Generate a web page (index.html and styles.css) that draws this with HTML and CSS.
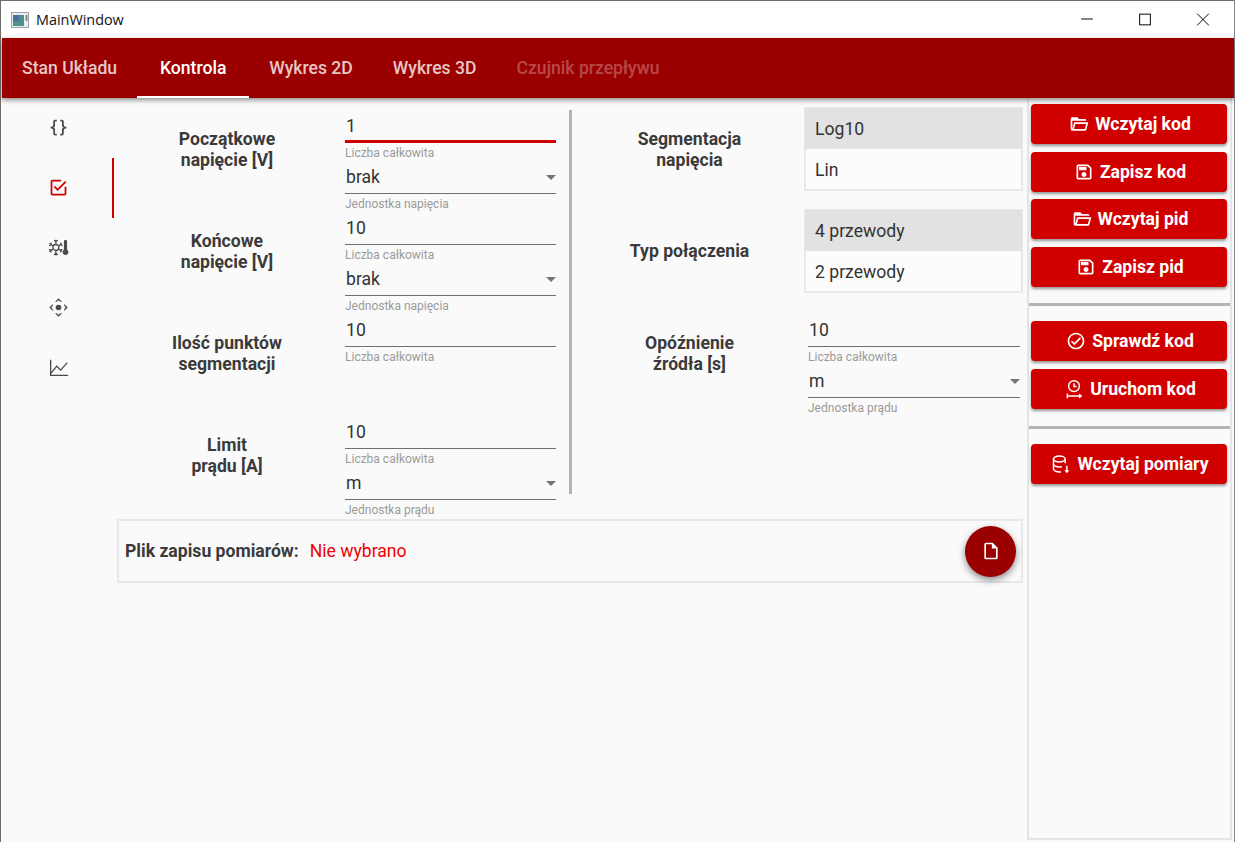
FILE: index.html
```html
<!DOCTYPE html>
<html lang="pl">
<head>
<meta charset="utf-8">
<title>MainWindow</title>
<link rel="stylesheet" href="styles.css">
</head>
<body>
<div class="window">
  <header class="titlebar">
    <svg class="app-icon" viewBox="0 0 18 16"><rect x="0.5" y="0.5" width="17" height="15" fill="#e8eef2" stroke="#9aa3aa"/><rect x="2" y="3" width="11" height="11" fill="#4f8f8a"/><rect x="2" y="3" width="6" height="6" fill="#4a6f98"/><rect x="14.5" y="3" width="2" height="6" fill="#7d8a92"/></svg>
    <span class="title">MainWindow</span>
    <div class="win-controls">
      <svg class="win-btn" viewBox="0 0 46 38"><path d="M17 18.5H29" stroke="#000" fill="none"/></svg>
      <svg class="win-btn" viewBox="0 0 46 38"><rect x="17.500" y="13.500" width="11" height="11" stroke="#000" fill="none"/></svg>
      <svg class="win-btn" viewBox="0 0 46 38"><path d="M17 13L29 25M29 13L17 25" stroke="#000" fill="none"/></svg>
    </div>
  </header>

  <nav class="appbar">
    <a class="tab">Stan Układu</a>
    <a class="tab tab-active">Kontrola</a>
    <a class="tab">Wykres 2D</a>
    <a class="tab">Wykres 3D</a>
    <a class="tab tab-disabled">Czujnik przepływu</a>
  </nav>

  <div class="content">
    <aside class="rail">
      <div class="rail-item">
        <svg class="rail-icon" viewBox="0 0 24 24"><path d="M8,3A2,2 0 0,0 6,5V9A2,2 0 0,1 4,11H3V13H4A2,2 0 0,1 6,15V19A2,2 0 0,0 8,21H10V19H8V14A2,2 0 0,0 6,12A2,2 0 0,0 8,10V5H10V3M16,3A2,2 0 0,1 18,5V9A2,2 0 0,0 20,11H21V13H20A2,2 0 0,0 18,15V19A2,2 0 0,1 16,21H14V19H16V14A2,2 0 0,1 18,12A2,2 0 0,1 16,10V5H14V3H16Z"/></svg>
      </div>
      <div class="rail-item rail-item-active">
        <svg class="rail-icon" viewBox="0 0 24 24"><path d="M19,19H5V5H15V3H5C3.89,3 3,3.89 3,5V19A2,2 0 0,0 5,21H19A2,2 0 0,0 21,19V11H19M7.91,10.08L6.5,11.5L11,16L21,6L19.59,4.58L11,13.17L7.91,10.08Z"/></svg>
      </div>
      <div class="rail-item">
        <svg class="rail-icon" viewBox="0 0 24 24"><circle cx="9" cy="12" r="3.400" fill="none" stroke="currentColor" stroke-width="1.500"/><path d="M9 3V8.600M9 15.400V21M7 3.500L9 5.500L11 3.500M7 20.500L9 18.500L11 20.500M1.500 7.500L6.100 10.300M11.900 13.700L16 16.300M1.500 16.500L6.100 13.700M11.900 10.300L16 7.700M1.300 10L3.800 9L3.300 6.500M1.300 14L3.800 15L3.300 17.500M14.700 6.500L14.200 9L16.700 10M14.700 17.500L14.200 15L16.700 14" fill="none" stroke="currentColor" stroke-width="1.400"/><path d="M20 3A1.800 1.800 0 0 1 21.800 4.800V14.500A3.300 3.300 0 1 1 18.200 14.500V4.800A1.800 1.800 0 0 1 20 3Z"/></svg>
      </div>
      <div class="rail-item">
        <svg class="rail-icon" viewBox="0 0 24 24"><circle cx="12" cy="12" r="3.200"/><path d="M12 1.500L16 5.500H14L12 3.800L10 5.500H8ZM12 22.500L8 18.500H10L12 20.200L14 18.500H16ZM1.500 12L5.500 8V10L3.800 12L5.500 14V16ZM22.500 12L18.500 16V14L20.200 12L18.500 10V8Z"/></svg>
      </div>
      <div class="rail-item">
        <svg class="rail-icon" viewBox="0 0 24 24"><path d="M3 3V21H23" fill="none" stroke="currentColor" stroke-width="1.500"/><path d="M3.500 18.500L10 10.500L14.500 15L22 6.500" fill="none" stroke="currentColor" stroke-width="1.500"/></svg>
      </div>
    </aside>

    <main class="main">
      <div class="form">
        <section class="form-left">
          <div class="row">
            <div class="row-label">Początkowe<br>napięcie [V]</div>
            <div class="fields">
              <div class="field"><div class="input input-focus">1</div><div class="helper">Liczba całkowita</div></div>
              <div class="field"><div class="input">brak<span class="caret"></span></div><div class="helper">Jednostka napięcia</div></div>
            </div>
          </div>
          <div class="row">
            <div class="row-label">Końcowe<br>napięcie [V]</div>
            <div class="fields">
              <div class="field"><div class="input">10</div><div class="helper">Liczba całkowita</div></div>
              <div class="field"><div class="input">brak<span class="caret"></span></div><div class="helper">Jednostka napięcia</div></div>
            </div>
          </div>
          <div class="row">
            <div class="row-label">Ilość punktów<br>segmentacji</div>
            <div class="fields">
              <div class="field"><div class="input">10</div><div class="helper">Liczba całkowita</div></div>
            </div>
          </div>
          <div class="row">
            <div class="row-label">Limit<br>prądu [A]</div>
            <div class="fields">
              <div class="field"><div class="input">10</div><div class="helper">Liczba całkowita</div></div>
              <div class="field"><div class="input">m<span class="caret"></span></div><div class="helper">Jednostka prądu</div></div>
            </div>
          </div>
        </section>

        <div class="form-divider"></div>

        <section class="form-right">
          <div class="row-r">
            <div class="row-label-r">Segmentacja<br>napięcia</div>
            <div class="toggle">
              <div class="toggle-item toggle-on">Log10</div>
              <div class="toggle-item">Lin</div>
            </div>
          </div>
          <div class="row-r">
            <div class="row-label-r row-label-single">Typ połączenia</div>
            <div class="toggle">
              <div class="toggle-item toggle-on">4 przewody</div>
              <div class="toggle-item">2 przewody</div>
            </div>
          </div>
          <div class="row-r">
            <div class="row-label-r">Opóźnienie<br>źródła [s]</div>
            <div class="fields fields-r">
              <div class="field"><div class="input">10</div><div class="helper">Liczba całkowita</div></div>
              <div class="field"><div class="input">m<span class="caret"></span></div><div class="helper">Jednostka prądu</div></div>
            </div>
          </div>
        </section>
      </div>

      <div class="file-panel">
        <span class="file-label">Plik zapisu pomiarów:</span>
        <span class="file-value">Nie wybrano</span>
        <button class="fab">
          <svg class="fab-icon" viewBox="0 0 24 24"><path d="M14,2H6A2,2 0 0,0 4,4V20A2,2 0 0,0 6,22H18A2,2 0 0,0 20,20V8L14,2M18,20H6V4H13V9H18V20Z"/></svg>
        </button>
      </div>
    </main>

    <aside class="actions">
      <button class="btn"><svg class="btn-icon" viewBox="0 0 24 24"><path d="M6.100,10L4,18V8H21A2,2 0 0,0 19,6H12L10,4H4A2,2 0 0,0 2,6V18A2,2 0 0,0 4,20H19C19.900,20 20.700,19.400 20.900,18.500L23.200,10H6.100M19,18H6L7.600,12H20.600L19,18Z"/></svg>Wczytaj kod</button>
      <button class="btn"><svg class="btn-icon" viewBox="0 0 24 24"><path d="M17 3H5C3.890 3 3 3.900 3 5V19C3 20.100 3.890 21 5 21H19C20.100 21 21 20.100 21 19V7L17 3M19 19H5V5H16.170L19 7.830V19M12 12C10.340 12 9 13.340 9 15S10.340 18 12 18 15 16.660 15 15 13.660 12 12 12M6 6H15V10H6V6Z"/></svg>Zapisz kod</button>
      <button class="btn"><svg class="btn-icon" viewBox="0 0 24 24"><path d="M6.100,10L4,18V8H21A2,2 0 0,0 19,6H12L10,4H4A2,2 0 0,0 2,6V18A2,2 0 0,0 4,20H19C19.900,20 20.700,19.400 20.900,18.500L23.200,10H6.100M19,18H6L7.600,12H20.600L19,18Z"/></svg>Wczytaj pid</button>
      <button class="btn"><svg class="btn-icon" viewBox="0 0 24 24"><path d="M17 3H5C3.890 3 3 3.900 3 5V19C3 20.100 3.890 21 5 21H19C20.100 21 21 20.100 21 19V7L17 3M19 19H5V5H16.170L19 7.830V19M12 12C10.340 12 9 13.340 9 15S10.340 18 12 18 15 16.660 15 15 13.660 12 12 12M6 6H15V10H6V6Z"/></svg>Zapisz pid</button>
      <div class="sep sep-a"></div>
      <button class="btn"><svg class="btn-icon" viewBox="0 0 24 24"><path d="M12 2C6.500 2 2 6.500 2 12S6.500 22 12 22 22 17.500 22 12 17.500 2 12 2M12 20C7.590 20 4 16.410 4 12S7.590 4 12 4 20 7.590 20 12 16.410 20 12 20M16.590 7.580L10 14.170L7.410 11.590L6 13L10 17L18 9L16.590 7.580Z"/></svg>Sprawdź kod</button>
      <button class="btn"><svg class="btn-icon" viewBox="0 0 24 24"><circle cx="12" cy="8.500" r="6.500" fill="none" stroke="currentColor" stroke-width="1.800"/><path d="M12 5V9H15M4 17.500V23M4 20.500H19" fill="none" stroke="currentColor" stroke-width="1.800"/><path d="M18 17.500L22 20.500L18 23.500Z"/></svg>Uruchom kod</button>
      <div class="sep sep-b"></div>
      <button class="btn"><svg class="btn-icon" viewBox="0 0 24 24"><ellipse cx="10" cy="6" rx="7" ry="3.500" fill="none" stroke="currentColor" stroke-width="1.800"/><path d="M3 6V18C3 20 6.500 21.500 10 21.500H12M3 12C3 14 6.500 15.500 10 15.500C11 15.500 12 15.400 13 15.200M17 6V11M19 14V20" fill="none" stroke="currentColor" stroke-width="1.800"/><path d="M16 19.500H22L19 23Z"/></svg>Wczytaj pomiary</button>
    </aside>
  </div>
</div>
</body>
</html>
```

FILE: styles.css
```css
* { box-sizing: border-box; }

html, body {
  margin: 0;
  height: 100%;
  overflow: hidden;
}

body {
  font-family: Roboto, sans-serif;
  font-size: 17.6px;
  color: #333;
  background: #fafafa;
}

.window {
  display: flex;
  flex-direction: column;
  height: 842px;
  border-top: 1px solid #6e6e6e;
  border-left: 1px solid #6e6e6e;
  border-right: 1px solid #8a8a8a;
  background: #fafafa;
}

.titlebar {
  display: flex;
  align-items: center;
  flex: none;
  height: 37px;
  padding-left: 10px;
  background: #fff;
}

.app-icon { width: 18px; height: 16px; flex: none; }

.title {
  margin-left: 7px;
  font-family: "Open Sans", sans-serif;
  font-size: 14.4px;
  color: #111;
}

.win-controls {
  display: flex;
  margin-left: auto;
  margin-right: 2px;
}

.win-btn {
  display: block;
  width: 58px;
  height: 37px;
}

.appbar {
  position: relative;
  z-index: 2;
  display: flex;
  flex: none;
  height: 60px;
  margin-left: 1px;
  background: #9b0000;
  box-shadow: 0 2px 5px rgba(0, 0, 0, .45);
}

.tab {
  display: flex;
  align-items: center;
  justify-content: center;
  min-width: 112px;
  padding: 2px 20px 0;
  font-weight: 500;
  color: rgba(255, 255, 255, .78);
  border-bottom: 2px solid transparent;
  white-space: nowrap;
}

.tab-active {
  color: #fff;
  border-bottom-color: #fff;
}

.tab-disabled { color: rgba(255, 255, 255, .3); }

.content {
  display: flex;
  flex: 1;
  min-height: 0;
}

.rail {
  flex: none;
  width: 113px;
}

.rail-item {
  display: flex;
  align-items: center;
  justify-content: center;
  height: 60px;
  padding: 0 0 1px 3px;
  color: #4a4a4a;
  border-right: 2px solid transparent;
}

.rail-item-active {
  color: #d10000;
  border-right-color: #d10000;
}

.rail-icon {
  display: block;
  width: 21px;
  height: 21px;
  fill: currentColor;
}

.main {
  flex: none;
  width: 913px;
  padding-top: 9px;
  padding-left: 3px;
}

.form {
  display: flex;
  height: 412px;
}

.form-left { flex: none; width: 452px; }

.row {
  display: flex;
  height: 102px;
  padding-top: 8px;
}

.row-label {
  flex: none;
  width: 220px;
  margin-right: 8px;
  padding-top: 14px;
  font-weight: 700;
  line-height: 21px;
  text-align: center;
  color: #3a3a3a;
}

.fields { flex: none; width: 211px; }

.field { height: 51px; }

.input {
  position: relative;
  height: 28px;
  padding: 0 1px;
  line-height: 22px;
  border-bottom: 1px solid #707070;
  color: #333;
}

.input-focus {
  border-bottom: 3px solid #d10000;
}

.helper {
  margin-top: 3px;
  font-size: 12px;
  line-height: 14px;
  color: #9a9a9a;
}

.caret {
  position: absolute;
  right: 0;
  top: 9px;
  width: 0;
  height: 0;
  border-left: 5px solid transparent;
  border-right: 5px solid transparent;
  border-top: 5px solid #757575;
}

.form-divider {
  flex: none;
  width: 3px;
  height: 384px;
  margin-top: 3px;
  background: #b4b4b4;
}

.form-right { flex: none; width: 451px; }

.row-r {
  display: flex;
  height: 102px;
}

.row-label-r {
  flex: none;
  width: 232px;
  padding: 22px 0 0 3px;
  font-weight: 700;
  line-height: 21px;
  text-align: center;
  color: #3a3a3a;
}

.row-label-single { padding-top: 32px; }

.toggle {
  flex: none;
  width: 219px;
  height: 84px;
  border: 2px solid #e8e8e8;
  background: #fcfcfc;
}

.toggle-item {
  height: 41px;
  padding: 1px 9px 0;
  line-height: 40px;
  color: #333;
}

.toggle-on {
  margin: -1px -1px 0;
  padding: 1px 10px 0;
  height: 41px;
  background: #e2e2e2;
}

.fields-r {
  width: 212px;
  margin-left: 4px;
  padding-top: 8px;
}

.file-panel {
  display: flex;
  align-items: center;
  width: 906px;
  height: 64px;
  padding: 0 5px 0 6px;
  border: 2px solid #e8e8e8;
  background: #fafafa;
}

.file-label {
  font-weight: 700;
  color: #3a3a3a;
}

.file-value {
  margin-left: 11px;
  color: #ee0000;
}

.fab {
  display: flex;
  align-items: center;
  justify-content: center;
  width: 51px;
  height: 51px;
  margin-left: auto;
  padding: 0;
  border: 0;
  border-radius: 50%;
  background: #9b0000;
  color: #fff;
  box-shadow: 0 3px 7px rgba(0, 0, 0, .45);
}

.fab-icon { width: 20px; height: 20px; fill: currentColor; }

.actions {
  display: flex;
  flex-direction: column;
  gap: 7.5px;
  flex: none;
  width: 205px;
  height: 742px;
  padding: 6px 3px 0 2px;
  border-left: 2px solid #e4e4e4;
  border-right: 2px solid #e4e4e4;
  border-bottom: 2px solid #e4e4e4;
  margin-bottom: 2px;
}

.btn {
  display: flex;
  align-items: center;
  justify-content: center;
  flex: none;
  height: 40px;
  padding: 0 0 0 2px;
  border: 0;
  border-radius: 4px;
  background: #d10000;
  color: #fff;
  font-family: Roboto, sans-serif;
  font-size: 17.6px;
  font-weight: 700;
  box-shadow: 0 2px 3px rgba(0, 0, 0, .4);
}

.btn-icon {
  width: 20px;
  height: 20px;
  margin-right: 6px;
  fill: currentColor;
}

.sep {
  flex: none;
  height: 3px;
  margin-left: -2px;
  margin-right: -3px;
  background: #b4b4b4;
}

.sep-a { margin-top: 9px; margin-bottom: 7.5px; }
.sep-b { margin-top: 10px; margin-bottom: 7.5px; }
```
